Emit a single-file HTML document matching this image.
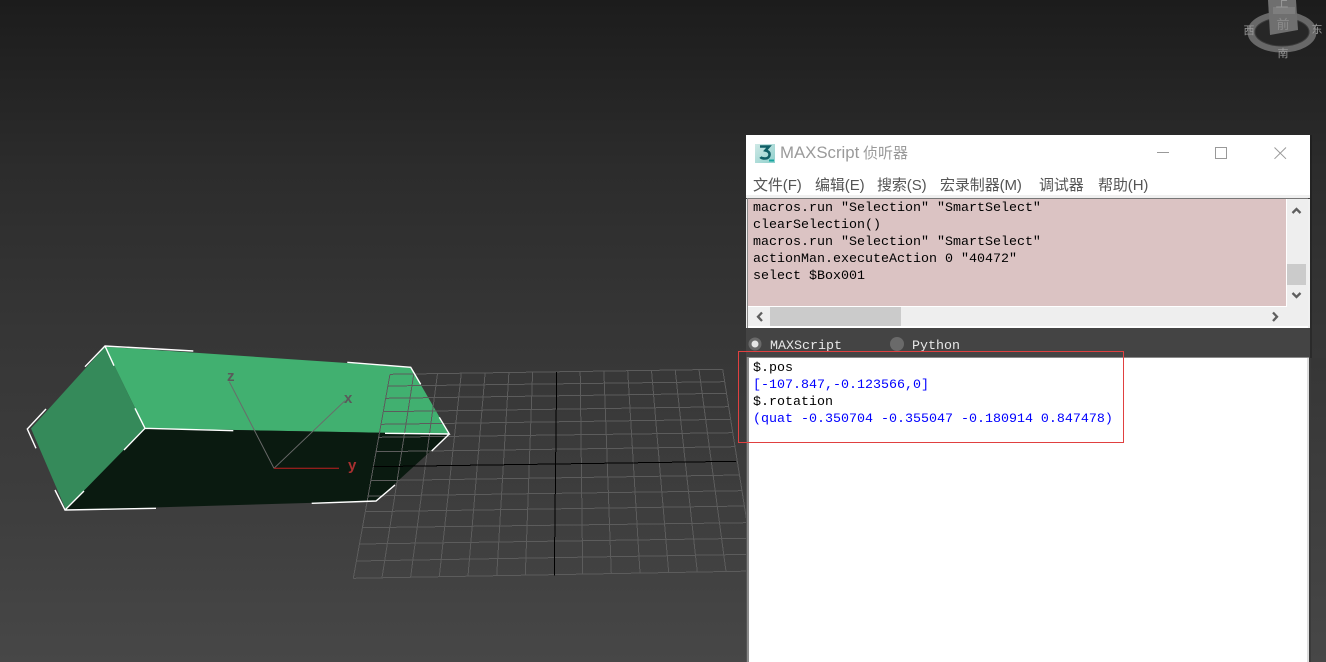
<!DOCTYPE html>
<html>
<head>
<meta charset="utf-8">
<style>
html,body{margin:0;padding:0;width:1326px;height:662px;overflow:hidden;background:#2a2a2a}
#bg{position:absolute;left:0;top:0;width:1326px;height:662px;background:linear-gradient(#1c1c1c 0,#2c2c2c 170px,#363636 335px,#3e3e3e 515px,#474747 662px)}
svg{position:absolute;left:0;top:0}
.abs{position:absolute;white-space:pre}
.mono{font-family:"Liberation Mono",monospace;font-size:13.33px;line-height:17px}
.menu{font-family:"Liberation Sans","Noto Sans CJK SC",sans-serif;font-size:15px;letter-spacing:-.1px;color:#555;line-height:20px;top:175.500px}
</style>
</head>
<body>
<div id="bg"></div>
<svg width="1326" height="662" viewBox="0 0 1326 662">
  <!-- box -->
  <polygon points="105,346.7 410.7,367.3 449.3,434 145,428.3" fill="#41b070"/>
  <polygon points="105,346.7 145,428.3 66,510 31,428.5" fill="#358a5a"/>
  <polygon points="145,428.3 449.3,434 376,501 65,510" fill="#0a1a10"/>
  <!-- grid -->
  <g stroke="#5c5c5c" stroke-width="1" fill="none" shape-rendering="crispEdges">
    <path d="M390 374.3L353.3 578.3M413.8 373.9L382 577.8M437.5 373.6L410.6 577.3M461.3 373.2L439.3 576.7M485.1 372.9L468 576.2M508.9 372.5L496.7 575.7M532.6 372.2L525.3 575.2M580.2 371.4L582.7 574.1M603.9 371.1L611.3 573.6M627.7 370.7L640 573.1M651.5 370.4L668.7 572.6M675.2 370L697.3 572.1M699 369.7L726 571.5M722.7 369.3L754.7 571"/>
    <path d="M390 374.3L722.7 369.3M387.9 386L724.7 381.7M385.7 398.3L726.3 393.3M383.3 411.7L728.7 406.7M381 424.3L730.7 419.3M378.7 437.3L732.7 432.7M376.1 451.7L735 446.7M370.9 480.7L739.7 475M368.1 496L742 490.7M365.3 511.7L744.3 506M362.4 527.7L747 522.7M359.5 544L749.7 538.3M356.4 561L752 554.3M353.3 578.3L754.7 571"/>
  </g>
  <g stroke="#000" stroke-width="1" fill="none" shape-rendering="crispEdges">
    <path d="M373.3 466.7L736 461.3"/>
    <path d="M556.7 372L554.3 575.7"/>
  </g>
  <!-- axes -->
  <g fill="none" stroke-width="1">
    <path d="M274 468.3L229.3 381.7" stroke="#6a6a6a"/>
    <path d="M274 468.3L345 400.7" stroke="#6a6a6a"/>
    <path d="M274 468.3L339 468.3" stroke="#c02020"/>
  </g>
  <g font-family="'Liberation Sans',sans-serif" font-size="15" font-weight="bold">
    <text x="227" y="381" fill="#5a5a5a">z</text>
    <text x="344" y="403" fill="#5a5a5a">x</text>
    <text x="348" y="470" fill="#a83030">y</text>
  </g>
  <!-- selection brackets -->
  <g stroke="#fff" stroke-width="1.4" fill="none">
    <path d="M85 366.7L105 346L193.3 351M105 346L114 365.7"/>
    <path d="M347.3 362.3L410.7 367.3L420.7 384.3"/>
    <path d="M439.3 417.3L449.3 434L385 433.3M449.3 434L431.7 451"/>
    <path d="M135 408.3L145 428.3L233.3 430.7M145 428.3L124 450"/>
    <path d="M46 409L27.3 429L36 448.3"/>
    <path d="M55 490L65 510L156 508.3M65 510L84 491"/>
    <path d="M311.7 503.3L376 501L395 485"/>
  </g>
  <!-- view cube -->
  <ellipse cx="1282" cy="32" rx="31" ry="17" fill="none" stroke="#686868" stroke-width="7"/>
  <ellipse cx="1282" cy="32" rx="27" ry="14" fill="#272727" stroke="#3c3c3c" stroke-width="1"/>
  <polygon points="1268,0 1296,0 1298,30 1270,35" fill="#6f6f6f"/>
  <rect x="1273" y="7" width="22" height="7" fill="#7e7e7e"/>
  <g font-family="'Liberation Sans','Noto Sans CJK SC',sans-serif" fill="#989898" text-anchor="middle">
    <text x="1282" y="7" font-size="13">上</text>
    <text x="1283" y="29" font-size="13" fill="#8c8c8c">前</text>
    <text x="1249" y="34" font-size="11">西</text>
    <text x="1317" y="33" font-size="11">东</text>
    <text x="1283" y="57" font-size="11">南</text>
  </g>
</svg>

<!-- window -->
<div class="abs" style="left:1310px;top:135px;width:2px;height:527px;background:rgba(0,0,0,.22)"></div>
<div class="abs" style="left:746px;top:135px;width:564px;height:527px;background:#444"></div>
<div class="abs" style="left:746px;top:135px;width:564px;height:60px;background:#fff"></div>
<div class="abs" style="left:746px;top:195px;width:564px;height:3px;background:#f0f0f0"></div>
<div class="abs" style="left:746px;top:199px;width:1px;height:129px;background:#f0f0f0"></div>
<div class="abs" style="left:747px;top:198px;width:1px;height:130px;background:#8a8a8a"></div>
<div class="abs" style="left:1308px;top:199px;width:2px;height:129px;background:#f0f0f0"></div>
<div class="abs" style="left:748px;top:199px;width:560px;height:129px;background:#eeeeee"></div>
<div class="abs" style="left:748px;top:198px;width:560px;height:1px;background:#777"></div>
<div class="abs" style="left:748px;top:199px;width:538px;height:107px;background:#dbc3c3"></div>
<div class="abs" style="left:1287px;top:264px;width:19px;height:21px;background:#cbcbcb"></div>
<div class="abs" style="left:770px;top:307px;width:131px;height:19px;background:#cbcbcb"></div>
<div class="abs" style="left:748px;top:306px;width:538px;height:1px;background:#fff"></div>
<div class="abs" style="left:1286px;top:199px;width:1px;height:108px;background:#fff"></div>
<div class="abs" style="left:748px;top:326px;width:560px;height:2px;background:#fff"></div>

<svg width="1326" height="662" viewBox="0 0 1326 662">
  <defs>
    <linearGradient id="ic" x1="0" y1="0" x2="1" y2="1"><stop offset="0" stop-color="#cfe9e6"/><stop offset="1" stop-color="#8fd0cc"/></linearGradient>
  </defs>
  <rect x="755" y="144" width="20" height="19" fill="url(#ic)"/>
  <path d="M760 146.500H769L765.500 150.500Q770 151.500 769.500 155Q769 158.500 765 158.500Q761.500 158.500 760.500 157" fill="none" stroke="#0f5f66" stroke-width="2.600"/>
  <path d="M769 160.500H774" stroke="#18a5a0" stroke-width="2"/>
  <!-- window buttons -->
  <path d="M1157 152.500H1169" stroke="#999" stroke-width="1"/>
  <rect x="1215.500" y="147.500" width="11" height="11" fill="none" stroke="#999" stroke-width="1"/>
  <path d="M1274.500 147.500L1286 158.800M1286 147.500L1274.500 158.800" stroke="#999" stroke-width="1" fill="none"/>
  <!-- scrollbar arrows -->
  <g fill="none" stroke="#5e5e5e" stroke-width="2.300">
    <path d="M1292.500 213L1296.500 209L1300.500 213"/>
    <path d="M1292.500 293L1296.500 297L1300.500 293"/>
    <path d="M762 312.500L758 316.700L762 321"/>
    <path d="M1273 312.500L1277 316.700L1273 321"/>
  </g>
  <!-- radios -->
  <circle cx="755" cy="344" r="6.500" fill="#6a6a6a"/>
  <circle cx="755" cy="344" r="3.500" fill="#e6e6e6"/>
  <circle cx="897" cy="344" r="7" fill="#6a6a6a"/>
</svg>

<!-- title and menu -->
<div class="abs" style="left:780px;top:143px;font:16.800px/20px 'Liberation Sans',sans-serif;color:#9a9a9a">MAXScript</div>
<div class="abs" style="left:863px;top:143px;font:15px/20px 'Noto Sans CJK SC',sans-serif;color:#9a9a9a">侦听器</div>
<div class="abs menu" style="left:753px">文件(F)</div>
<div class="abs menu" style="left:815px">编辑(E)</div>
<div class="abs menu" style="left:877px">搜索(S)</div>
<div class="abs menu" style="left:940px">宏录制器(M)</div>
<div class="abs menu" style="left:1039px">调试器</div>
<div class="abs menu" style="left:1098px">帮助(H)</div>

<!-- top listener text -->
<div class="abs mono" style="left:753px;top:199px;width:530px;height:107px;overflow:hidden;color:#000"><div style="height:1px"></div>macros.run "Selection" "SmartSelect"
clearSelection()
macros.run "Selection" "SmartSelect"
actionMan.executeAction 0 "40472"
select $Box001</div>

<!-- radio labels (clipped by editor) -->
<div class="abs" style="left:748px;top:330px;width:560px;height:22px;overflow:hidden">
  <div class="abs mono" style="left:22px;top:8px;color:#e8e8e8">MAXScript</div>
  <div class="abs mono" style="left:164px;top:8px;color:#e8e8e8">Python</div>
</div>

<!-- bottom editor -->
<div class="abs" style="left:746px;top:357px;width:1px;height:305px;background:#555"></div>
<div class="abs" style="left:747px;top:357px;width:2px;height:305px;background:#8a8a8a"></div>
<div class="abs" style="left:749px;top:358px;width:558px;height:304px;background:#fff"></div>
<div class="abs" style="left:749px;top:357px;width:560px;height:1px;background:#8a8a8a"></div>
<div class="abs" style="left:1307px;top:358px;width:2px;height:304px;background:#dddddd"></div>
<div class="abs" style="left:1309px;top:358px;width:2px;height:304px;background:#3a3a3a"></div>
<div class="abs" style="left:1311px;top:358px;width:15px;height:304px;background:linear-gradient(#363636,#474747)"></div>
<div class="abs mono" style="left:753px;top:360px;color:#000">$.pos</div>
<div class="abs mono" style="left:753px;top:377px;color:#0000ff">[-107.847,-0.123566,0]</div>
<div class="abs mono" style="left:753px;top:394px;color:#000">$.rotation</div>
<div class="abs mono" style="left:753px;top:411px;color:#0000ff">(quat -0.350704 -0.355047 -0.180914 0.847478)</div>

<!-- red annotation -->
<div class="abs" style="left:738px;top:351px;width:386px;height:92px;border:1px solid #e04040;box-sizing:border-box"></div>
</body>
</html>
